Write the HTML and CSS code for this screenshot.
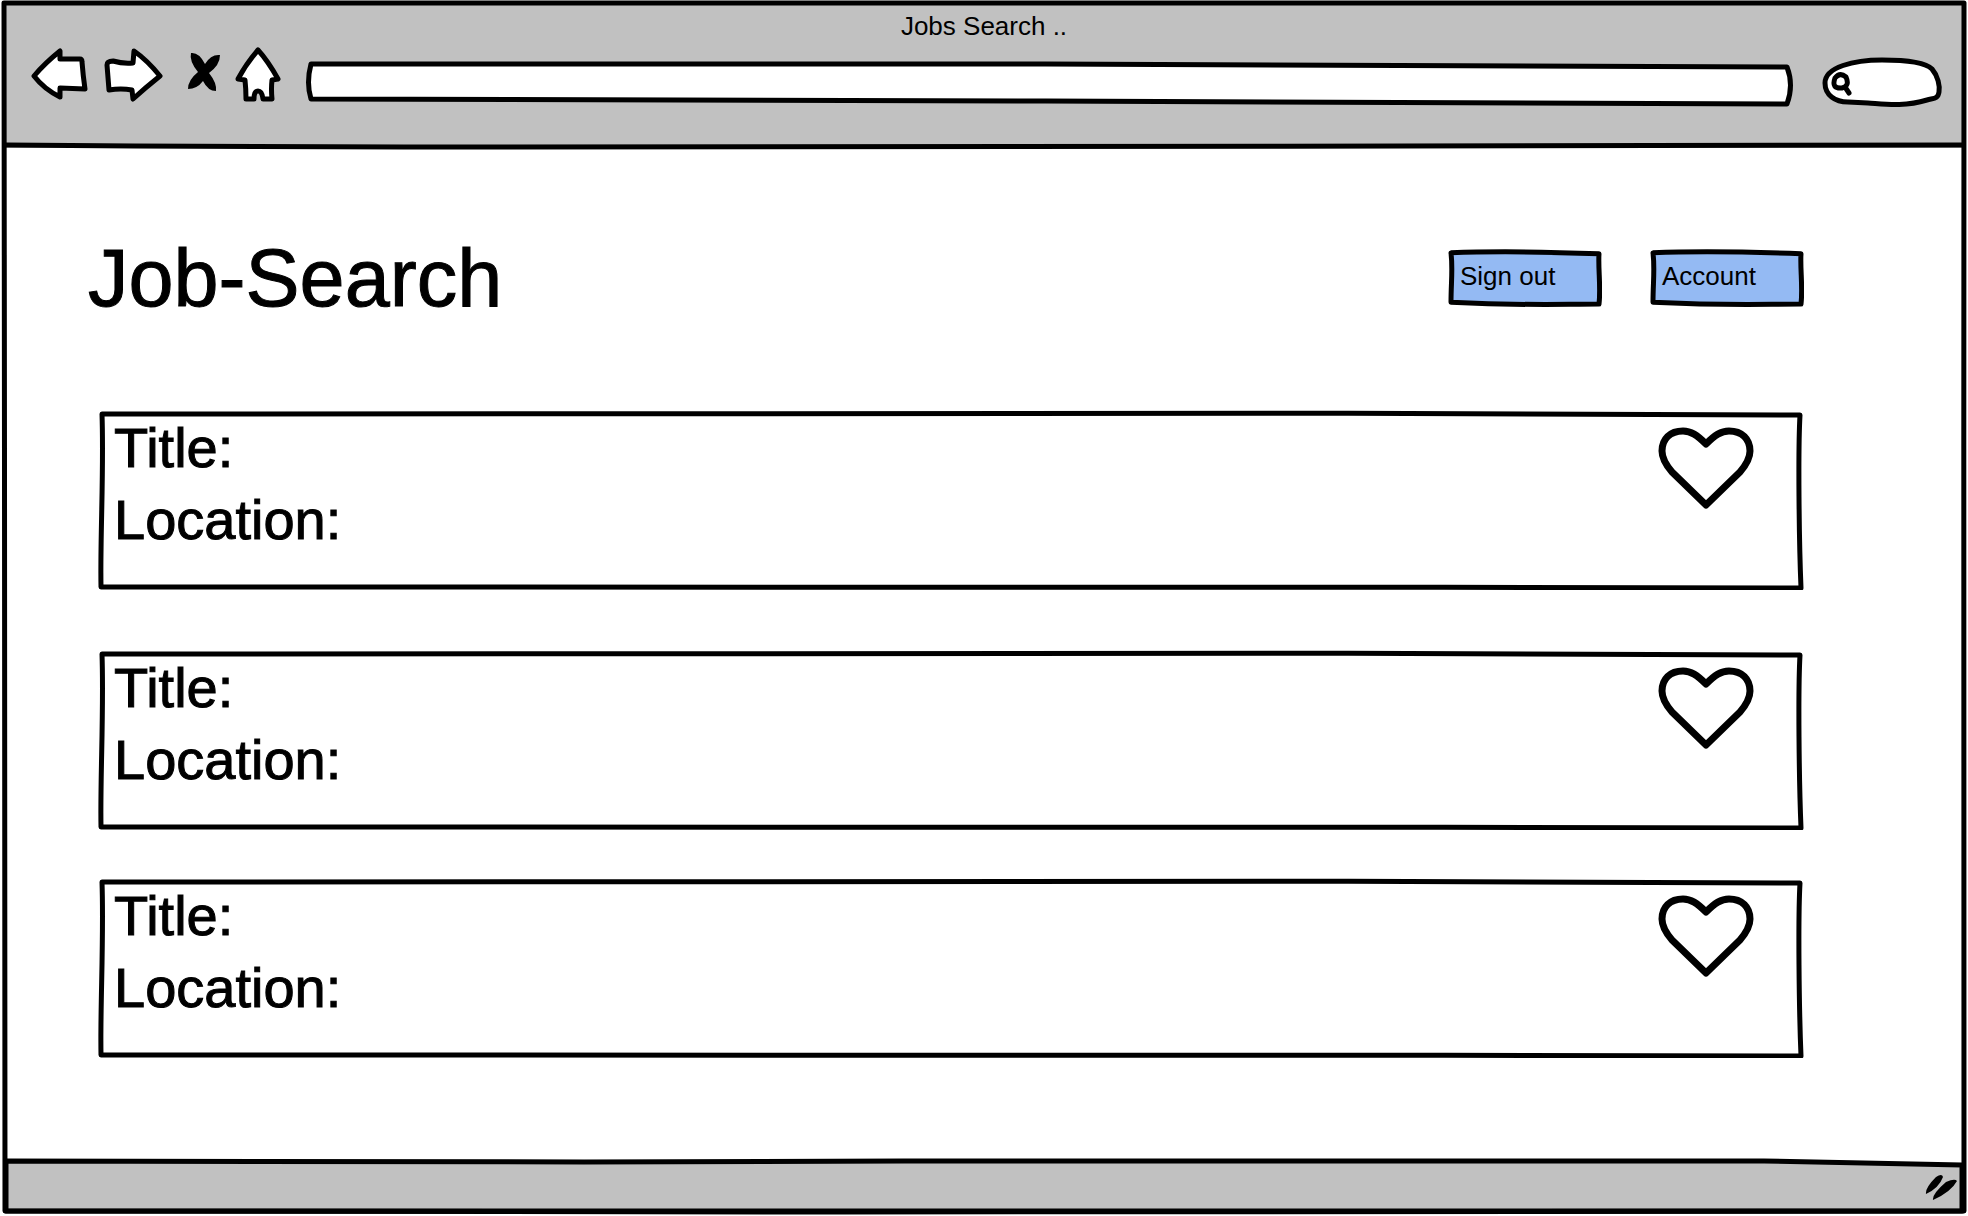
FILE: index.html
```html
<!DOCTYPE html>
<html lang="en">
<head>
<meta charset="utf-8">
<title>Jobs Search ..</title>
<link rel="stylesheet" href="styles.css">
</head>
<body>
<svg class="defs" width="0" height="0" aria-hidden="true">
  <symbol id="card-frame" viewBox="0 0 1706 180" preserveAspectRatio="none">
    <path class="ink" d="M4 4 C400 2 1100 2 1702 5 C1700 40 1701 130 1703 178 C1200 176 900 179 3 177 C2 130 6 60 4 4Z"/>
  </symbol>
  <symbol id="button-frame" viewBox="0 0 154 60" preserveAspectRatio="none">
    <path class="ink tint" d="M3 4 C50 2 100 3 151 5 C150 20 153 40 151 57 C110 57 80 59 3 55 C3 35 5 20 3 4Z"/>
  </symbol>
  <symbol id="heart" viewBox="0 0 96 84">
    <path class="ink heart-line" d="M48 18 C39 9 33 5 25 5 C12 5 4 13 4 25 C4 33 8 39 14 46 L48 79 L82 46 C88 39 92 33 92 25 C92 13 84 5 71 5 C63 5 57 9 48 18Z"/>
  </symbol>
</svg>

<div class="window">
  <header class="chrome">
    <svg class="sketch" viewBox="0 0 1960 144" preserveAspectRatio="none" aria-hidden="true"><path class="ink" d="M2 141 C140 142 200 143 400 143 C1000 143 1400 142 1958 141"/></svg>
    <div class="window-title">Jobs Search ..</div>
    <div class="toolbar">
      <nav class="nav" aria-label="Browser">
        <button type="button" class="tool" aria-label="Back"><svg width="58" height="60" viewBox="0 0 58 60"><path class="ink paper" d="M3 29 Q14 16 29 4 L29 12 L49 12 Q51 12 51 15 Q52 28 54 42 L29 41 L29 50 Q13 42 3 29Z"/></svg></button>
        <button type="button" class="tool" aria-label="Forward"><svg width="60" height="60" viewBox="0 0 60 60"><path class="ink paper" d="M4 18 Q4 14 10 14 Q20 17 30 16 L31 4 Q44 13 57 29 Q42 41 30 52 L29 43 Q18 41 6 43 Q5 30 4 18Z"/></svg></button>
        <button type="button" class="tool" aria-label="Stop"><svg width="34" height="60" viewBox="0 0 34 60"><path d="M4 6 Q12 5 18 17 Q24 7 33 8 Q33 18 22 26 Q30 36 29 44 Q21 44 16 34 Q10 42 1 42 Q1 33 11 25 Q2 14 4 6Z"/></svg></button>
        <button type="button" class="tool" aria-label="Home"><svg width="46" height="60" viewBox="0 0 46 60"><path class="ink paper" d="M23 3 Q33 14 43 32 L37 33 Q36 42 37 52 L28 52 Q27 44 23 44 Q19 44 19 52 L11 52 Q11 42 10 33 L3 32 Q11 17 23 3Z"/></svg></button>
      </nav>
      <div class="address">
        <svg class="sketch" viewBox="0 0 1488 60" preserveAspectRatio="none" aria-hidden="true"><path class="ink paper" d="M6 17 L740 17 L1481 20 Q1488 38 1481 57 L740 54 L6 52 Q1 36 6 17Z"/></svg>
        <input class="field" type="text" aria-label="Address">
      </div>
      <div class="search">
        <svg class="sketch" viewBox="0 0 120 62" preserveAspectRatio="none" aria-hidden="true"><path class="ink paper" d="M26 56 C13 56 3 49 3 37 C3 21 32 14 60 14 C88 14 104 17 110 23 C116 30 118 40 117 46 C116 53 112 52 105 54 C82 61 62 58 46 57 L26 56Z"/></svg>
        <svg class="magnifier" width="22" height="26" viewBox="0 0 22 26" aria-hidden="true"><path class="ink" d="M5 7 Q10 1 16 6 Q20 15 12 17 Q1 18 5 7Z M15 16 L19 22"/></svg>
        <input class="field" type="search" aria-label="Search">
      </div>
    </div>
  </header>

  <main class="page">
    <div class="masthead">
      <h1>Job-Search</h1>
      <div class="actions">
        <button type="button" class="action"><svg class="sketch" aria-hidden="true"><use href="#button-frame"/></svg><span>Sign out</span></button>
        <button type="button" class="action"><svg class="sketch" aria-hidden="true"><use href="#button-frame"/></svg><span>Account</span></button>
      </div>
    </div>
    <section class="jobs">
      <article class="job featured">
        <svg class="sketch" aria-hidden="true"><use href="#card-frame"/></svg>
        <div class="details"><p>Title:</p><p>Location:</p></div>
        <button type="button" class="like" aria-label="Save job"><svg width="96" height="84"><use href="#heart"/></svg></button>
      </article>
      <article class="job">
        <svg class="sketch" aria-hidden="true"><use href="#card-frame"/></svg>
        <div class="details"><p>Title:</p><p>Location:</p></div>
        <button type="button" class="like" aria-label="Save job"><svg width="96" height="84"><use href="#heart"/></svg></button>
      </article>
      <article class="job">
        <svg class="sketch" aria-hidden="true"><use href="#card-frame"/></svg>
        <div class="details"><p>Title:</p><p>Location:</p></div>
        <button type="button" class="like" aria-label="Save job"><svg width="96" height="84"><use href="#heart"/></svg></button>
      </article>
    </section>
  </main>

  <footer class="status">
    <svg class="sketch" viewBox="0 0 1960 54" preserveAspectRatio="none" aria-hidden="true"><path class="ink metal" d="M2 3 C200 5 600 4 900 3 C1300 2 1600 2 1760 3 L1958 7 L1958 53 L2 53Z"/></svg>
    <svg class="grip" width="34" height="28" viewBox="0 0 34 28" aria-hidden="true"><path d="M2 20 Q1 14 12 3 Q18 -1 19 3 Q15 14 2 20Z M9 26 Q8 20 22 8 Q31 4 33 7 Q27 18 9 26Z"/></svg>
  </footer>
  <svg class="sketch" viewBox="0 0 1968 1216" preserveAspectRatio="none" aria-hidden="true"><path class="ink" d="M4 3 L1964 3 C1963 400 1965 900 1964 1211 C1500 1213 600 1212 5 1211 C4 900 5 400 4 3Z"/></svg>
</div>
</body>
</html>
```

FILE: styles.css
```css
* {
  box-sizing: border-box;
}

body {
  margin: 0;
  background: #fff;
  color: #000;
  font-family: "Liberation Sans", Arial, sans-serif;
}

h1,
p {
  margin: 0;
  font-weight: 400;
}

button {
  padding: 0;
  border: 0;
  background: none;
  color: inherit;
  font: inherit;
  cursor: pointer;
}

svg {
  display: block;
}

.defs {
  position: absolute;
}

/* Hand-drawn outline that stretches with the box it decorates */
.sketch {
  position: absolute;
  inset: 0;
  width: 100%;
  height: 100%;
  overflow: visible;
  pointer-events: none;
}

.ink {
  fill: none;
  stroke: #000;
  stroke-width: 5px;
  stroke-linejoin: round;
  stroke-linecap: round;
  vector-effect: non-scaling-stroke;
}

.paper {
  fill: #fff;
}

.metal {
  fill: #c1c1c1;
}

.tint {
  fill: #94baf3;
}

.heart-line {
  stroke-width: 7px;
}

.window {
  position: relative;
  display: flex;
  flex-direction: column;
  min-height: 100vh;
  padding: 4px;
}

.chrome {
  position: relative;
  height: 144px;
  background: #c1c1c1;
}

.window-title {
  padding-top: 2px;
  font-size: 26px;
  line-height: 40px;
  text-align: center;
}

.toolbar {
  display: flex;
  align-items: center;
  padding: 0 22px 0 27px;
}

.nav {
  display: flex;
}

.tool {
  margin-right: 14px;
}

.tool:nth-child(2) {
  margin-right: 24px;
}

.address {
  position: relative;
  flex: 1;
  height: 60px;
  margin: 0 28px 0 10px;
}

.search {
  position: relative;
  display: flex;
  align-items: center;
  width: 120px;
  height: 62px;
  padding-left: 8px;
}

.magnifier {
  position: relative;
  flex: none;
  margin-top: 14px;
}

.field {
  position: relative;
  width: 100%;
  min-width: 0;
  height: 100%;
  padding: 8px 16px 0;
  border: 0;
  outline: 0;
  background: none;
  font: inherit;
  font-size: 26px;
  appearance: none;
}

.page {
  flex: 1;
  padding: 86px 160px 80px 84px;
}

.masthead {
  display: flex;
  align-items: center;
  justify-content: space-between;
  height: 88px;
}

h1 {
  font-size: 81px;
  line-height: 88px;
  -webkit-text-stroke: 1px #000;
}

.actions {
  display: flex;
  gap: 48px;
}

.action {
  position: relative;
  width: 154px;
  height: 58px;
  padding: 0 12px 4px;
  font-size: 26px;
  text-align: left;
}

.action span {
  position: relative;
}

.jobs {
  display: flex;
  flex-direction: column;
  gap: 48px;
  padding: 88px 0 0 10px;
}

.job {
  position: relative;
  display: flex;
  justify-content: space-between;
  height: 180px;
  padding: 2px 50px 0 16px;
}

.featured {
  margin-bottom: 12px;
}

.details {
  font-size: 56px;
  line-height: 72px;
  -webkit-text-stroke: 1px #000;
}

.like {
  position: relative;
  align-self: flex-start;
  margin-top: 14px;
}

.status {
  position: relative;
  display: flex;
  align-items: center;
  justify-content: flex-end;
  height: 54px;
  padding: 6px 6px 0 0;
}

.grip {
  position: relative;
}
```
